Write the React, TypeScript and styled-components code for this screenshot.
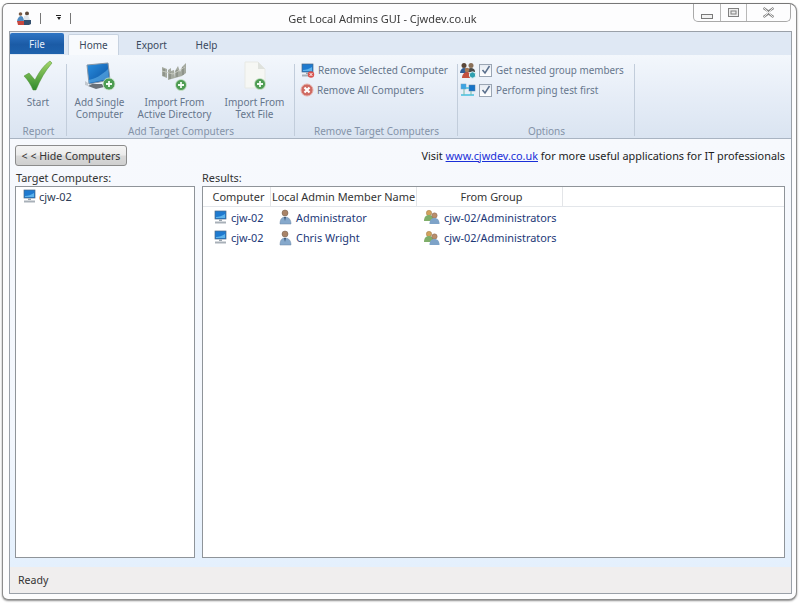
import React from "react";
import styled, { createGlobalStyle } from "styled-components";

const Global = createGlobalStyle`
  html, body { margin: 0; padding: 0; background: #fff; }
  body { font-family: "Noto Sans", "Open Sans", sans-serif; width: 800px; height: 604px; overflow: hidden; }
  * { box-sizing: border-box; }
`;

const WindowFrame = styled.div`
  margin: 3px 3px 0 2px;
  width: 795px;
  height: 597px;
  background: #fdfdfe;
  border: 1px solid #8d8d8d;
  border-top-color: #777;
  border-radius: 6px 8px 8px 6px;
  box-shadow: 0 1px 2px rgba(0,0,0,.45);
  padding: 0 4px 5px 6px;
  display: flex;
  flex-direction: column;
  filter: blur(0.3px);
`;
const TitleBar = styled.div`
  height: 27px;
  display: grid;
  grid-template-columns: 1fr auto 1fr;
  align-items: start;
  padding-right: 36px;
`;
const Quick = styled.div`
  display: flex;
  align-items: center;
  gap: 8px;
  padding: 5px 0 0 7px;
  height: 24px;
`;
const QuickSep = styled.span`
  width: 1px;
  height: 11px;
  background: #777;
`;
const Caret = styled.span`
  width: 5px;
  height: 7px;
  margin: 0 1px 0 7px;
  display: flex;
  flex-direction: column;
  align-items: center;
  gap: 1px;
  &::before { content: ""; width: 5px; height: 1px; background: #222; }
  &::after { content: ""; border: 2.5px solid transparent; border-top: 3px solid #222; border-bottom: 0; }
`;
const Title = styled.div`
  font-size: 11px;
  color: #3d3d3d;
  padding-top: 6px;
  line-height: 17px;
  white-space: nowrap;
`;
const Controls = styled.div`
  justify-self: end;
  display: flex;
  flex: none;
  width: 98px;
  height: 18px;
  margin-right: -35px;
  border: 1px solid #a9a9a9;
  border-top: 0;
  border-radius: 0 0 5px 5px;
`;
const Ctl = styled.div<{ $w: number }>`
  width: ${(p) => p.$w}px;
  display: flex;
  justify-content: center;
  align-items: center;
  & + & { border-left: 1px solid #b8b8b8; }
`;
const Client = styled.div`
  flex: 1;
  border: 1px solid #9aa0a8;
  display: flex;
  flex-direction: column;
  min-height: 0;
`;
const TabStrip = styled.div`
  height: 23px;
  display: flex;
  align-items: flex-end;
  background: #dfe8f4;
  font-size: 10px;
  color: #3b4a5e;
`;
const FileTab = styled.div`
  width: 54px;
  height: 21px;
  margin: 0 4px 1px 0;
  border-radius: 2px 2px 0 0;
  background: linear-gradient(#2f75c4, #1b5ba6 55%, #1e62ad);
  color: #e4eefa;
  display: flex;
  align-items: center;
  justify-content: center;
`;
const Tab = styled.div<{ $active?: boolean; $w: number }>`
  width: ${(p) => p.$w}px;
  height: 21px;
  display: flex;
  align-items: center;
  justify-content: center;
  border-radius: 2px 2px 0 0;
  background: ${(p) => (p.$active ? "#f8fafd" : "transparent")};
  border: ${(p) => (p.$active ? "1px solid #c7d2e0" : "1px solid transparent")};
  border-bottom: 0;
`;
const Ribbon = styled.div`
  height: 84px;
  display: flex;
  background: linear-gradient(#f3f7fc, #e6edf7 50%, #dae4f1);
  border-bottom: 1px solid #a9b4c2;
  padding-top: 5px;
`;
const Group = styled.div<{ $w: number }>`
  width: ${(p) => p.$w}px;
  position: relative;
  display: flex;
  flex-direction: column;
  &::after {
    content: "";
    position: absolute;
    right: 0;
    top: 4px;
    bottom: 2px;
    width: 1px;
    background: #c2cddb;
  }
`;
const GroupBody = styled.div<{ $pad?: string; $col?: boolean }>`
  flex: 1;
  display: flex;
  flex-direction: ${(p) => (p.$col ? "column" : "row")};
  padding: ${(p) => p.$pad || "0"};
`;
const GroupLabel = styled.div`
  height: 13px;
  font-size: 10px;
  line-height: 13px;
  text-align: center;
  color: #8493a8;
`;
const BigButton = styled.div<{ $w: number }>`
  width: ${(p) => p.$w}px;
  display: flex;
  flex-direction: column;
  align-items: center;
  font-size: 10px;
  line-height: 12px;
  color: #66768c;
  text-align: center;
  white-space: nowrap;
`;
const BigLine = styled.div`
  height: 12px;
  overflow: visible;
`;
const BigIcon = styled.div`
  height: 31px;
  margin-bottom: 5px;
  display: flex;
  align-items: flex-end;
  justify-content: center;
`;
const SmallRow = styled.div<{ $gap?: number; $size?: number }>`
  height: 20px;
  display: flex;
  align-items: center;
  gap: ${(p) => p.$gap ?? 3}px;
  font-size: ${(p) => p.$size ?? 10}px;
  color: #66768c;
  white-space: nowrap;
`;
const Check = styled.span`
  width: 13px;
  height: 13px;
  border: 1px solid #9aa5b3;
  background: linear-gradient(#e6ebf2, #fff);
  display: inline-flex;
  align-items: center;
  justify-content: center;
  margin-right: 2px;
`;
const Content = styled.div`
  flex: 1;
  min-height: 0;
  background: linear-gradient(#f7f9fd, #f3f7fd 70%, #e4f0fd);
  padding: 6px 6px 9px 5px;
  display: flex;
  flex-direction: column;
`;
const TopRow = styled.div`
  height: 21px;
  display: flex;
  justify-content: space-between;
  align-items: center;
`;
const HideButton = styled.div`
  width: 112px;
  height: 21px;
  border: 1px solid #8b8b8b;
  border-radius: 3px;
  background: linear-gradient(#f4f4f4, #ebebeb 48%, #d9d9d9 52%, #cfcfcf);
  font-size: 10.6px;
  color: #333;
  display: flex;
  align-items: center;
  justify-content: center;
  white-space: nowrap;
`;
const Visit = styled.div`
  font-size: 10.87px;
  color: #1c1c1c;
  white-space: nowrap;
`;
const SiteLink = styled.a`
  color: #1a2fd8;
  text-decoration: underline;
`;
const Panels = styled.div`
  flex: 1;
  min-height: 0;
  margin-top: 4px;
  display: grid;
  grid-template-columns: 180px 583px;
  column-gap: 7px;
`;
const Panel = styled.div`
  display: flex;
  flex-direction: column;
  min-height: 0;
`;
const PanelLabel = styled.div<{ $pad?: number }>`
  height: 16px;
  padding-left: ${(p) => p.$pad ?? 0}px;
  font-size: 10.9px;
  line-height: 15px;
  color: #333;
`;
const ListBox = styled.div`
  flex: 1;
  background: #fff;
  border: 1px solid #8f9499;
`;
const TargetRow = styled.div`
  height: 18px;
  padding-left: 6px;
  display: flex;
  align-items: center;
  gap: 2px;
  font-size: 11px;
  color: #2d3b55;
`;
const Header = styled.div`
  height: 20px;
  display: flex;
  font-size: 10.95px;
  color: #333;
  border-bottom: 1px solid #e3e6ea;
`;
const HeadCell = styled.div<{ $w: number; $shift?: number }>`
  width: ${(p) => p.$w}px;
  padding-left: ${(p) => p.$shift ?? 0}px;
  display: flex;
  align-items: center;
  justify-content: center;
  white-space: nowrap;
  border-right: 1px solid #e3e5e8;
`;
const Row = styled.div`
  height: 20.5px;
  display: flex;
  font-size: 10.9px;
  color: #1d3877;
`;
const Cell = styled.div<{ $w: number; $pad: number; $gap: number }>`
  width: ${(p) => p.$w}px;
  padding-left: ${(p) => p.$pad}px;
  gap: ${(p) => p.$gap}px;
  display: flex;
  align-items: center;
  white-space: nowrap;
`;
const StatusBar = styled.div`
  height: 26px;
  flex: none;
  background: #f0eeee;
  padding-left: 8px;
  display: flex;
  align-items: center;
  font-size: 10.6px;
  color: #333;
`;

const AppLogo = () => (
  <svg width="16" height="15" viewBox="0 0 16 15">
    <circle cx="4.500" cy="3" r="1.800" fill="#7a5a44" />
    <circle cx="11" cy="2.500" r="2" fill="#5f4a3a" />
    <path d="M8 5l4-1 2 5H8z" fill="#dfe4ea" />
    <path d="M1 11c0-3 2-6 4-6s3 3 3 6z" fill="#4f8ac0" />
    <path d="M1 10h8v4H2z" fill="#c8473e" />
    <path d="M8 9h7v4l-2 1H8z" fill="#34506f" />
  </svg>
);

const BigCheck = () => (
  <svg width="30" height="31" viewBox="0 0 30 31">
    <defs>
      <linearGradient id="ck" x1="0" y1="0" x2="0" y2="1">
        <stop offset="0" stopColor="#a5d66a" />
        <stop offset="1" stopColor="#2f8a2c" />
      </linearGradient>
    </defs>
    <path d="M1 16l5-3 6 7C16 12 21 5 27 1l2 2C22 11 17 20 13 30H10C8 25 5 20 1 16z" fill="url(#ck)" stroke="#4d8f35" strokeWidth=".5" />
  </svg>
);

const Plus = ({ x, y, r = 5.5 }: { x: number; y: number; r?: number }) => (
  <g>
    <circle cx={x} cy={y} r={r} fill="#4d9c52" stroke="#cfe6cf" strokeWidth=".8" />
    <path d={`M${x - 3} ${y}h6M${x} ${y - 3}v6`} stroke="#f2fbf2" strokeWidth="1.800" />
  </g>
);

const BigMonitor = () => (
  <svg width="32" height="29" viewBox="0 0 32 29">
    <defs>
      <linearGradient id="scr" x1="0" y1="0" x2="1" y2="1">
        <stop offset="0" stopColor="#2a8fe0" />
        <stop offset="1" stopColor="#0a4f9e" />
      </linearGradient>
    </defs>
    <path d="M3 3l21-2 2 17-21 4z" fill="url(#scr)" stroke="#8a98a6" />
    <path d="M4 18c7-1 14-5 20-11l1 10-20 4z" fill="#6cb9ef" opacity=".55" />
    <path d="M4 24l4-2h10l2 3-8 2z" fill="#6a7178" />
    <path d="M1 19l3 2v3l-3-1z" fill="#c3c9cf" />
    <Plus x={25} y={22} r={6} />
  </svg>
);

const ADIcon = () => (
  <svg width="28" height="29" viewBox="0 0 28 29">
    <g fill="#a5aaa0">
      <path d="M1 5l5 2v9l-5-2z" />
      <path d="M7 8l3-2v3l3-1 1 8-7 2z" />
      <path d="M14 9l3-5 2 6 2-5 4-4v10l-4 3-7 2z" />
    </g>
    <path d="M3 7v7M9 10v7M16 8v7M22 5v8" stroke="#6f746c" strokeWidth=".8" />
    <path d="M1 9l11 3 12-7" stroke="#cfd2c8" strokeWidth=".8" fill="none" />
    <Plus x={20} y={23} />
  </svg>
);

const FileIcon = () => (
  <svg width="24" height="30" viewBox="0 0 24 30">
    <path d="M2 1h13l7 7v19H2z" fill="#f6f7f4" stroke="#e7e9e4" />
    <path d="M15 1v7h7z" fill="#dfe2dd" />
    <Plus x={17} y={23} />
  </svg>
);

const SmallMonitor = ({ cross }: { cross?: boolean }) => (
  <svg width="15" height="15" viewBox="0 0 15 15">
    <rect x="2" y="1" width="11" height="8" fill="#1e7ad0" stroke="#4c6a88" strokeWidth=".7" />
    <path d="M3 7c3 0 6-1 9-3v4H3z" fill="#5db3ec" />
    <rect x="6" y="9.500" width="3" height="1.500" fill="#98a2ac" />
    <path d="M2 11.500h11v2H2z" fill="#a8b0b8" />
    {cross && (
      <g>
        <circle cx="11" cy="11.500" r="3.200" fill="#d9534f" />
        <path d="M9.600 10l2.800 3M12.400 10l-2.800 3" stroke="#fff" strokeWidth=".9" />
      </g>
    )}
  </svg>
);

const RemoveAll = () => (
  <svg width="14" height="14" viewBox="0 0 14 14">
    <circle cx="7" cy="7" r="6" fill="#cf6a62" stroke="#e6b0aa" />
    <path d="M4.500 4.500l5 5M9.500 4.500l-5 5" stroke="#fff" strokeWidth="2.200" />
  </svg>
);

const User = () => (
  <svg width="13" height="16" viewBox="0 0 13 16">
    <circle cx="6" cy="4" r="3" fill="#a98468" stroke="#6f5a4a" strokeWidth=".5" />
    <path d="M1 15c0-5 2-7 5-7 4 0 6 3 6 7z" fill="#86a9cc" stroke="#6a87a6" strokeWidth=".5" />
    <path d="M5 8h2l-1 4z" fill="#3c5878" />
  </svg>
);

const Users = () => (
  <svg width="16" height="16" viewBox="0 0 16 16">
    <circle cx="5" cy="4" r="2.700" fill="#d2a25c" stroke="#8f7040" strokeWidth=".4" />
    <path d="M0 12c0-4 2-6 5-6s5 2 5 6z" fill="#7fae6a" />
    <circle cx="10.500" cy="6.500" r="2.700" fill="#b98e6c" stroke="#7d6350" strokeWidth=".4" />
    <path d="M5.500 15c0-4 2-6 5-6s5 2 5 6z" fill="#7ea3c8" />
  </svg>
);

const NestedIcon = () => (
  <svg width="17" height="17" viewBox="0 0 17 17">
    <circle cx="4" cy="3.500" r="2.500" fill="#5a4638" />
    <path d="M0 11c0-3 2-5 4-5s4 2 4 5z" fill="#2f5d96" />
    <circle cx="11" cy="3.500" r="2.500" fill="#8a7058" />
    <path d="M7 10c0-3 2-4 4-4s4 1 4 4z" fill="#4a4a48" />
    <circle cx="7" cy="8" r="2.300" fill="#a87a58" />
    <path d="M2 16c0-3 2-6 5-6s5 3 5 6z" fill="#c4503f" />
    <circle cx="12.500" cy="13" r="3.200" fill="#2fa0b0" stroke="#e2f2f4" />
  </svg>
);

const PingIcon = () => (
  <svg width="17" height="15" viewBox="0 0 17 15">
    <rect x="9" y="2" width="6" height="6" fill="#1673c8" stroke="#5f7f9c" strokeWidth=".5" />
    <rect x="1" y="1" width="5" height="5" fill="#3ba4e4" stroke="#6fa0c0" strokeWidth=".5" />
    <path d="M6 5h3M1 12h13" stroke="#44c0e0" strokeWidth="1.400" />
    <path d="M4 6v6M11 8v4" stroke="#7ba" />
  </svg>
);

const Tick = () => (
  <svg width="10" height="10" viewBox="0 0 10 10">
    <path d="M1.500 5l2.500 3 4.500-7" fill="none" stroke="#5a6f8c" strokeWidth="1.500" />
  </svg>
);

const MinIcon = () => (
  <svg width="12" height="14" viewBox="0 0 12 14">
    <rect x=".5" y="8.500" width="11" height="4" fill="#f2f2f2" stroke="#7a7a7a" />
  </svg>
);
const MaxIcon = () => (
  <svg width="11" height="10" viewBox="0 0 11 10">
    <rect x=".5" y=".5" width="10" height="8" fill="#eee" stroke="#808080" />
    <rect x="3" y="3" width="5" height="3" fill="none" stroke="#808080" />
  </svg>
);
const CloseIcon = () => (
  <svg width="13" height="11" viewBox="0 0 13 11">
    <path d="M1.500 1l5 3.500 5-3.500M1.500 10l5-3.500 5 3.500" fill="none" stroke="#8a8a8a" strokeWidth="2.200" />
    <path d="M2 1l9 9M11 1l-9 9" stroke="#e8e8e8" strokeWidth="1" />
  </svg>
);

const results = [{ name: "Administrator" }, { name: "Chris Wright" }];

export default function App() {
  return (
    <>
      <Global />
      <WindowFrame>
        <TitleBar>
          <Quick>
            <AppLogo />
            <QuickSep />
            <Caret />
            <QuickSep />
          </Quick>
          <Title>Get Local Admins GUI - Cjwdev.co.uk</Title>
          <Controls>
            <Ctl $w={26}><MinIcon /></Ctl>
            <Ctl $w={26}><MaxIcon /></Ctl>
            <Ctl $w={44}><CloseIcon /></Ctl>
          </Controls>
        </TitleBar>
        <Client>
          <TabStrip>
            <FileTab>File</FileTab>
            <Tab $active $w={51}>Home</Tab>
            <Tab $w={65}>Export</Tab>
            <Tab $w={45}>Help</Tab>
          </TabStrip>
          <Ribbon>
            <Group $w={57}>
              <GroupBody>
                <BigButton $w={56}>
                  <BigIcon><BigCheck /></BigIcon>
                  <BigLine>Start</BigLine>
                </BigButton>
              </GroupBody>
              <GroupLabel>Report</GroupLabel>
            </Group>
            <Group $w={228}>
              <GroupBody>
                <BigButton $w={65}>
                  <BigIcon><BigMonitor /></BigIcon>
                  <BigLine>Add Single</BigLine>
                  <BigLine>Computer</BigLine>
                </BigButton>
                <BigButton $w={85}>
                  <BigIcon><ADIcon /></BigIcon>
                  <BigLine>Import From</BigLine>
                  <BigLine>Active Directory</BigLine>
                </BigButton>
                <BigButton $w={75}>
                  <BigIcon><FileIcon /></BigIcon>
                  <BigLine>Import From</BigLine>
                  <BigLine>Text File</BigLine>
                </BigButton>
              </GroupBody>
              <GroupLabel>Add Target Computers</GroupLabel>
            </Group>
            <Group $w={163}>
              <GroupBody $col $pad="0 0 0 5px">
                <SmallRow><SmallMonitor cross />Remove Selected Computer</SmallRow>
                <SmallRow><RemoveAll />Remove All Computers</SmallRow>
              </GroupBody>
              <GroupLabel>Remove Target Computers</GroupLabel>
            </Group>
            <Group $w={177}>
              <GroupBody $col $pad="0 0 0 2px">
                <SmallRow $gap={2} $size={9.85}><NestedIcon /><Check><Tick /></Check>Get nested group members</SmallRow>
                <SmallRow $gap={2} $size={9.85}><PingIcon /><Check><Tick /></Check>Perform ping test first</SmallRow>
              </GroupBody>
              <GroupLabel>Options</GroupLabel>
            </Group>
          </Ribbon>
          <Content>
            <TopRow>
              <HideButton>&lt; &lt; Hide Computers</HideButton>
              <Visit>
                Visit <SiteLink href="#">www.cjwdev.co.uk</SiteLink> for more useful applications for IT professionals
              </Visit>
            </TopRow>
            <Panels>
              <Panel>
                <PanelLabel $pad={1}>Target Computers:</PanelLabel>
                <ListBox>
                  <TargetRow><SmallMonitor />cjw-02</TargetRow>
                </ListBox>
              </Panel>
              <Panel>
                <PanelLabel>Results:</PanelLabel>
                <ListBox>
                  <Header>
                    <HeadCell $w={68} $shift={4}>Computer</HeadCell>
                    <HeadCell $w={146}>Local Admin Member Name</HeadCell>
                    <HeadCell $w={146} $shift={4}>From Group</HeadCell>
                  </Header>
                  {results.map((r) => (
                    <Row key={r.name}>
                      <Cell $w={68} $pad={10} $gap={3}><SmallMonitor />cjw-02</Cell>
                      <Cell $w={146} $pad={8} $gap={4}><User />{r.name}</Cell>
                      <Cell $w={200} $pad={7} $gap={4}><Users />cjw-02/Administrators</Cell>
                    </Row>
                  ))}
                </ListBox>
              </Panel>
            </Panels>
          </Content>
          <StatusBar>Ready</StatusBar>
        </Client>
      </WindowFrame>
    </>
  );
}
